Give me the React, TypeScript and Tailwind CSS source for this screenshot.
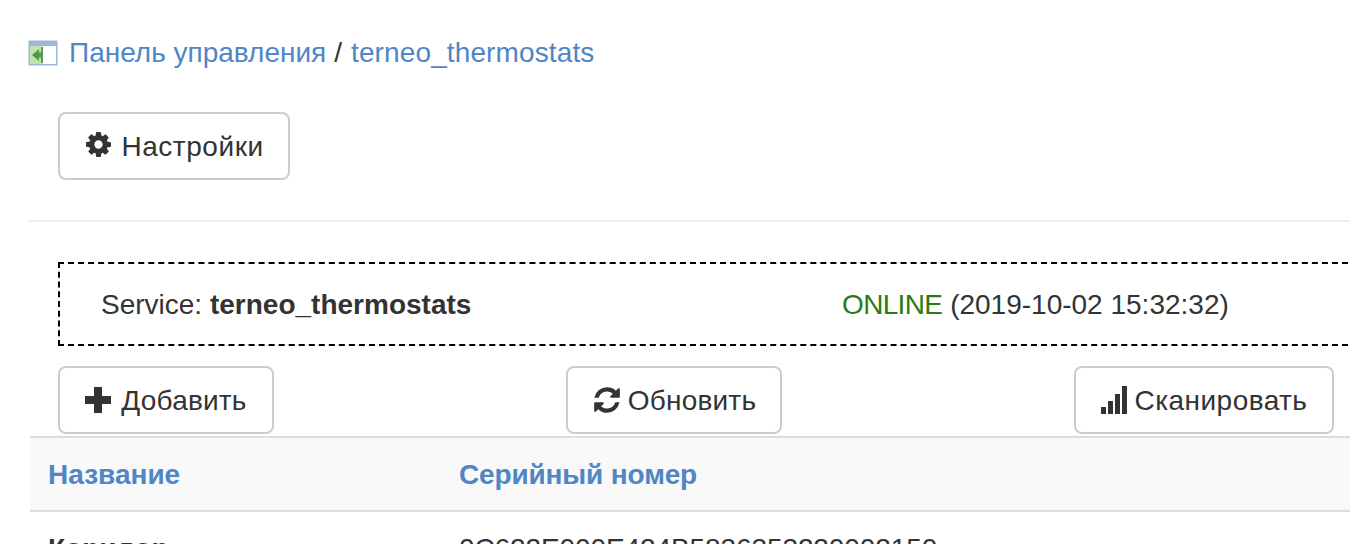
import type { ReactNode } from 'react';

const LINK = 'text-[#4f86c4]';

function ActionButton({ icon, label, className, labelClass }: { icon: ReactNode; label: string; className: string; labelClass: string }) {
  return (
    <button className={`flex h-[68px] items-center justify-center rounded-[8px] border-2 border-[#cccccc] bg-white text-[#333333] ${className}`}>
      {icon}
      <span className={`pt-[2px] ${labelClass}`}>{label}</span>
    </button>
  );
}

function CogIcon() {
  return (
    <svg viewBox="0 0 1792 1792" className="mb-[3px] mr-[8px] h-[29px] w-[29px]" fill="currentColor">
      <path d="M1152 896q0-106-75-181t-181-75-181 75-75 181 75 181 181 75 181-75 75-181zm512-109v222q0 12-8 23t-20 13l-185 28q-19 54-39 91 35 50 107 138 10 12 10 25t-9 23q-27 37-99 108t-94 71q-12 0-26-9l-138-108q-44 23-91 38-16 136-29 186-7 28-36 28h-222q-14 0-24.5-8.5t-11.5-21.5l-28-184q-49-16-90-37l-141 107q-10 9-25 9-14 0-25-11-126-114-165-168-7-10-7-23 0-12 8-23 15-21 51-66.5t54-70.5q-27-50-41-99l-183-27q-13-2-21-12.5t-8-23.5v-222q0-12 8-23t19-13l186-28q14-46 39-92-40-57-107-138-10-12-10-24 0-10 9-23 26-36 98.5-107.5t94.5-71.5q13 0 26 10l138 107q44-23 91-38 16-136 29-186 7-28 36-28h222q14 0 24.5 8.5t11.5 21.5l28 184q49 16 90 37l142-107q9-9 24-9 13 0 25 10 129 119 165 170 7 8 7 22 0 12-8 23-15 21-51 66.5t-54 70.5q26 50 41 98l183 28q13 2 21 12.5t8 23.5z" />
    </svg>
  );
}

function PlusIcon() {
  return (
    <svg viewBox="0 0 26 26" className="mr-[10px] h-[26px] w-[26px]" fill="currentColor">
      <path d="M9 0h8v9h9v8h-9v9H9v-9H0V9h9z" />
    </svg>
  );
}

function RefreshIcon() {
  return (
    <svg viewBox="0 0 1792 1792" className="mr-[6px] h-[30px] w-[30px]" fill="currentColor">
      <path d="M1639 1056q0 5-1 7-64 268-268 434.5t-478 166.5q-146 0-282.5-55t-243.5-157l-129 129q-19 19-45 19t-45-19-19-45v-448q0-26 19-45t45-19h448q26 0 45 19t19 45-19 45l-137 137q71 66 161 102t187 36q134 0 250-65t186-179q11-17 53-117 8-23 30-23h192q13 0 22.5 9.5t9.5 22.5zm25-800v448q0 26-19 45t-45 19h-448q-26 0-45-19t-19-45 19-45l138-138q-148-137-349-137-134 0-250 65t-186 179q-11 17-53 117-8 23-30 23h-199q-13 0-22.5-9.5t-9.5-22.5v-7q65-268 270-434.5t480-166.5q146 0 284 55.5t245 156.5l130-129q19-19 45-19t45 19 19 45z" />
    </svg>
  );
}

function SignalIcon() {
  return (
    <svg viewBox="0 0 26 28" className="mr-[8px] h-[28px] w-[26px]" fill="currentColor">
      <rect x="0" y="21" width="5" height="7" />
      <rect x="7" y="15" width="5" height="13" />
      <rect x="14" y="8" width="5" height="20" />
      <rect x="21" y="0" width="5" height="28" />
    </svg>
  );
}

export default function App() {
  return (
    <div className="h-[544px] w-[1350px] overflow-hidden bg-white pl-[28px] font-['Liberation_Sans',Arial,sans-serif] text-[28px] leading-[40px] text-[#333333]">
      {/* Breadcrumb */}
      <div className="mt-[33px] flex h-[40px] items-center">
        <svg width="31" height="26" viewBox="0 0 31 26" className="mr-[10px]">
          <rect x="0.5" y="0.5" width="29" height="25" fill="#9db7dc" />
          <rect x="2" y="6" width="26" height="18" fill="#ffffff" />
          <rect x="2" y="6" width="12" height="18" fill="#bfe3ae" />
          <path d="M13 7v16h2V7z" fill="#5d9c55" />
          <path d="M4 15l7-6v3.5h2v5h-2V21z" fill="#4f9a4a" />
        </svg>
        <a className={LINK}>Панель управления</a>
        <span className="ml-[8px] mr-[9px]">/</span>
        <a className={`${LINK} tracking-[0.12px]`}>terneo_thermostats</a>
      </div>

      {/* Settings */}
      <div className="mt-[39px] pl-[30px]">
        <ActionButton className="w-[232px]" labelClass="tracking-[0.55px]" icon={<CogIcon />} label="Настройки" />
      </div>

      <div className="mt-[40px] h-[2px] bg-[#eeeeee]" />

      {/* Service status */}
      <div className="ml-[30px] mt-[40px] flex h-[84px] w-[1300px] items-center border-y-2 border-l-2 border-dashed border-black pl-[41px] pt-[2px]">
        <div className="w-[741px]">
          Service: <b>terneo_thermostats</b>
        </div>
        <div>
          <span className="tracking-[-0.65px] text-[#2f7a12]">ONLINE</span> (2019-10-02 15:32:32)
        </div>
      </div>

      {/* Actions */}
      <div className="mt-[20px] flex pl-[30px]">
        <ActionButton className="w-[216px]" labelClass="tracking-[0.2px]" icon={<PlusIcon />} label="Добавить" />
        <ActionButton className="ml-[292px] w-[216px]" labelClass="tracking-[0.2px]" icon={<RefreshIcon />} label="Обновить" />
        <ActionButton className="ml-[292px] w-[260px]" labelClass="tracking-[0.45px]" icon={<SignalIcon />} label="Сканировать" />
      </div>

      {/* Table */}
      <div className="ml-[2px] mt-[2px]">
        <div className={`flex h-[76px] items-center border-y-2 border-[#dddddd] bg-[#f9f9f9] pl-[18px] pt-[2px] font-bold ${LINK}`}>
          <div className="w-[411px]">Название</div>
          <div className="tracking-[-0.15px]">Серийный номер</div>
        </div>
        <div className="flex pl-[18px] pt-[17px]">
          <div className="w-[411px] font-bold">Коридор</div>
          <div className="tracking-[-0.1px]">0C622E000E424B5836353220002150</div>
        </div>
      </div>
    </div>
  );
}
